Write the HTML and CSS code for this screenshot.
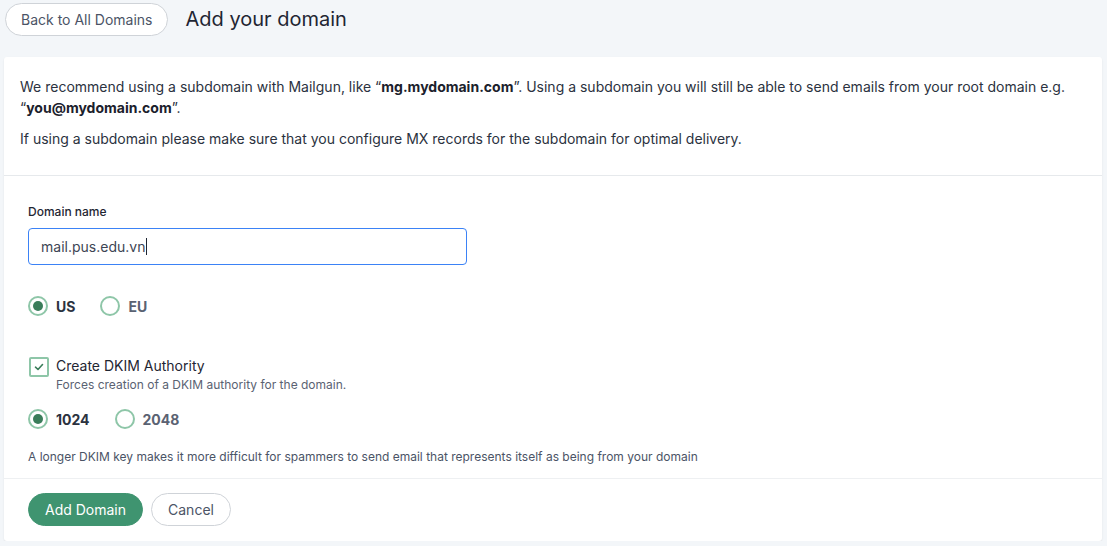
FILE: index.html
```html
<!DOCTYPE html>
<html>
<head>
  <meta charset="UTF-8">
  <title>Add your domain</title>
  <link rel="stylesheet" href="styles.css">
</head>
<body>
  <div class="header">
    <button class="btn-outline back">Back to All Domains</button>
    <h1>Add your domain</h1>
  </div>

  <div class="card">
    <div class="intro">
      <p>We recommend using a subdomain with Mailgun, like “<b>mg.mydomain.com</b>”. Using a subdomain you will still be able to send emails from your root domain e.g. “<b>you@mydomain.com</b>”.</p>
      <p>If using a subdomain please make sure that you configure MX records for the subdomain for optimal delivery.</p>
    </div>

    <div class="form">
      <label class="field-label" for="domain">Domain name</label>
      <div class="input">mail.pus.edu.vn<span class="caret"></span></div>

      <div class="radios region">
        <span class="radio on"></span><span class="radio-text">US</span>
        <span class="radio"></span><span class="radio-text muted">EU</span>
      </div>

      <div class="check-row">
        <span class="checkbox">
          <svg width="12" height="12" viewBox="0 0 12 12"><path d="M2.5 6.2 L5 8.5 L9.5 3.5" fill="none" stroke="#3a7d5a" stroke-width="1.6" stroke-linecap="round" stroke-linejoin="round"/></svg>
        </span>
        <div>
          <div class="check-title">Create DKIM Authority</div>
          <div class="check-desc">Forces creation of a DKIM authority for the domain.</div>
        </div>
      </div>

      <div class="radios keysize">
        <span class="radio on"></span><span class="radio-text">1024</span>
        <span class="radio"></span><span class="radio-text muted">2048</span>
      </div>

      <p class="help">A longer DKIM key makes it more difficult for spammers to send email that represents itself as being from your domain</p>
    </div>

    <div class="actions">
      <button class="btn-primary">Add Domain</button>
      <button class="btn-outline">Cancel</button>
    </div>
  </div>
</body>
</html>
```

FILE: styles.css
```css
body {
  margin: 0;
  background: #f3f6f9;
  font-family: Inter, "Noto Sans", sans-serif;
  color: #2b3240;
}
.header {
  display: flex;
  align-items: center;
  height: 38px;
  padding-left: 5px;
  margin-bottom: 19px;
}
.header h1 {
  font-size: 20px;
  font-weight: 400;
  margin: 0 0 0 17px;
  color: #1f2633;
}
button {
  font-family: Inter, "Noto Sans", sans-serif;
  font-size: 14px;
  cursor: pointer;
}
.btn-outline {
  height: 33px;
  padding: 0 16px;
  background: #fff;
  border: 1px solid #cfd3d8;
  border-radius: 17px;
  color: #4b5466;
}
.back {
  padding: 0 15px;
}
.btn-primary {
  height: 33px;
  padding: 0 16px;
  background: #3f9470;
  border: 1px solid #3f9470;
  border-radius: 17px;
  color: #fff;
  margin-right: 8px;
}
.card {
  margin: 0 5px 0 4px;
  background: #fff;
  border-radius: 3px;
  box-shadow: 0 1px 2px rgba(0, 0, 0, 0.08);
}
.intro {
  padding: 19px 16px 16px;
  border-bottom: 1px solid #e6e9ec;
  font-size: 14px;
  line-height: 21px;
}
.intro p {
  margin: 0 0 10px;
}
.intro b {
  font-weight: 700;
  color: #1b212c;
}
.form {
  padding: 28px 24px 12px;
  border-bottom: 1px solid #eef0f2;
}
.field-label {
  display: block;
  font-size: 12px;
  font-weight: 500;
  line-height: 16px;
  color: #1f2633;
  margin-bottom: 8px;
}
.input {
  width: 439px;
  height: 37px;
  box-sizing: border-box;
  border: 1px solid #3b82f6;
  border-radius: 4px;
  padding: 0 12px;
  display: flex;
  align-items: center;
  font-size: 14px;
  color: #3d4554;
}
.caret {
  display: inline-block;
  width: 1px;
  height: 17px;
  background: #1f2633;
  margin-left: 1px;
}
.radios {
  display: flex;
  align-items: center;
  height: 22px;
}
.region {
  margin-top: 30px;
}
.keysize {
  margin-top: 14px;
}
.radio {
  width: 16px;
  height: 16px;
  border: 2px solid #8ec6a8;
  border-radius: 50%;
  position: relative;
  flex: none;
}
.radio.on::after {
  content: "";
  position: absolute;
  left: 3px;
  top: 3px;
  width: 10px;
  height: 10px;
  border-radius: 50%;
  background: #3a7d5a;
}
.radio-text {
  font-size: 14px;
  font-weight: 700;
  margin: 0 25px 0 8px;
  color: #2b3240;
}
.radio-text.muted {
  color: #5a6272;
}
.check-row {
  display: flex;
  align-items: flex-start;
  margin-top: 39px;
}
.checkbox {
  width: 16px;
  height: 16px;
  border: 2px solid #8ec6a8;
  border-radius: 2px;
  display: flex;
  align-items: center;
  justify-content: center;
  margin: 1px 7px 0 1px;
  flex: none;
}
.check-title {
  font-size: 14px;
  line-height: 20px;
  color: #1f2633;
}
.check-desc {
  font-size: 12px;
  line-height: 18px;
  color: #5a6272;
}
.help {
  margin: 18px 0 0;
  font-size: 12px;
  line-height: 18px;
  color: #4b5466;
}
.actions {
  padding: 14px 24px 15px;
  display: flex;
  align-items: center;
}
```
